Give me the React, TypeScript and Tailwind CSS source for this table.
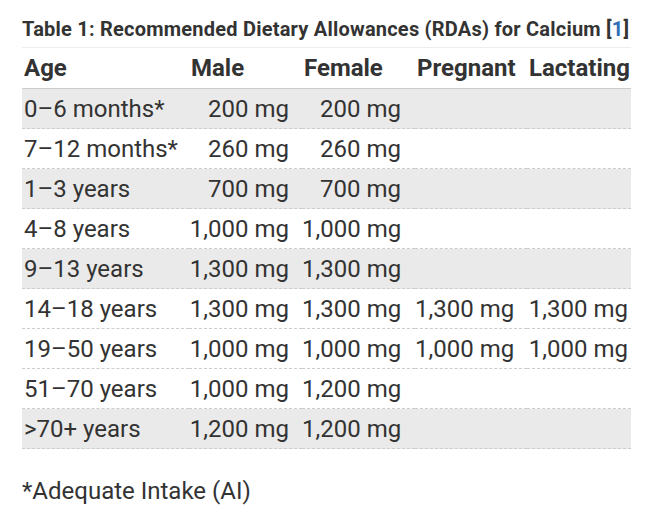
const rows: { age: string; male: string; female: string; preg: string; lact: string; shade: boolean }[] = [
  { age: "0–6 months*", male: "200 mg", female: "200 mg", preg: "", lact: "", shade: true },
  { age: "7–12 months*", male: "260 mg", female: "260 mg", preg: "", lact: "", shade: false },
  { age: "1–3 years", male: "700 mg", female: "700 mg", preg: "", lact: "", shade: true },
  { age: "4–8 years", male: "1,000 mg", female: "1,000 mg", preg: "", lact: "", shade: false },
  { age: "9–13 years", male: "1,300 mg", female: "1,300 mg", preg: "", lact: "", shade: true },
  { age: "14–18 years", male: "1,300 mg", female: "1,300 mg", preg: "1,300 mg", lact: "1,300 mg", shade: false },
  { age: "19–50 years", male: "1,000 mg", female: "1,000 mg", preg: "1,000 mg", lact: "1,000 mg", shade: false },
  { age: "51–70 years", male: "1,000 mg", female: "1,200 mg", preg: "", lact: "", shade: false },
  { age: ">70+ years", male: "1,200 mg", female: "1,200 mg", preg: "", lact: "", shade: true },
];

export default function App() {
  return (
    <div className="min-h-screen bg-white px-[22px] pt-[17px] text-[#333] font-['Roboto',sans-serif]">
      <div className="h-[30px] whitespace-nowrap text-[20px] font-bold leading-[24px] tracking-[0.22px] text-[#333]">
        Table 1: Recommended Dietary Allowances (RDAs) for Calcium [<span className="text-[#2f6fb5]">1</span>]
      </div>

      <table className="w-[609px] table-fixed border-collapse">
        <colgroup>
          <col className="w-[167px]" />
          <col className="w-[113px]" />
          <col className="w-[113px]" />
          <col className="w-[112px]" />
          <col className="w-[104px]" />
        </colgroup>
        <thead>
          <tr className="h-[41px] border-t border-b border-t-[#eeeeee] border-b-[#cccccc] border-b-dashed">
            <th className="pl-[2px] text-left text-[24px] font-bold leading-none">Age</th>
            <th className="pl-[2px] text-left text-[24px] font-bold leading-none">Male</th>
            <th className="pl-[2px] text-left text-[24px] font-bold leading-none">Female</th>
            <th className="pl-[2px] text-left text-[24px] font-bold leading-none">Pregnant</th>
            <th className="pl-[2px] text-left text-[24px] font-bold leading-none">Lactating</th>
          </tr>
        </thead>
        <tbody className="text-[24px] leading-none">
          {rows.map((r) => (
            <tr
              key={r.age}
              className={`h-[40px] border-b border-dashed border-[#cccccc] ${r.shade ? "bg-[#eaeaea]" : "bg-white"}`}
            >
              <td className="pl-[2px] text-left whitespace-nowrap">{r.age}</td>
              <td className="pr-[13px] text-right whitespace-nowrap">{r.male}</td>
              <td className="pr-[14px] text-right whitespace-nowrap">{r.female}</td>
              <td className="pr-[14px] text-right whitespace-nowrap">{r.preg}</td>
              <td className="pr-[3px] text-right whitespace-nowrap">{r.lact}</td>
            </tr>
          ))}
        </tbody>
      </table>

      <p className="mt-[27px] text-[24px] leading-[30px]">*Adequate Intake (AI)</p>
    </div>
  );
}
